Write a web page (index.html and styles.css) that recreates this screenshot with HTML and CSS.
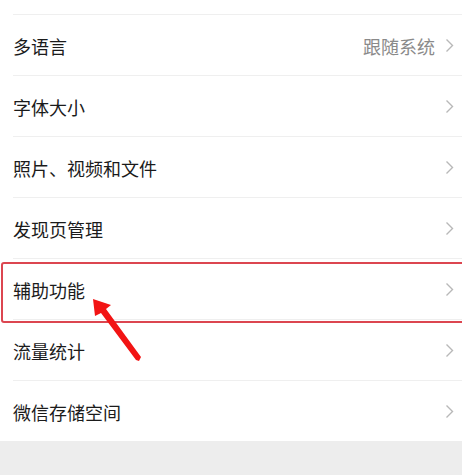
FILE: index.html
```html
<!DOCTYPE html>
<html lang="zh">
<head>
<meta charset="utf-8">
<link rel="stylesheet" href="styles.css">
</head>
<body>
<div class="page">
  <div class="top-spacer"></div>
  <ul class="list">
    <li class="row"><span class="label">多语言</span><span class="right"><span class="value">跟随系统</span><svg class="chev" viewBox="0 0 9 15"><polyline points="1.5,1.5 7.5,7.5 1.5,13.5"/></svg></span></li>
    <li class="row"><span class="label">字体大小</span><span class="right"><svg class="chev" viewBox="0 0 9 15"><polyline points="1.5,1.5 7.5,7.5 1.5,13.5"/></svg></span></li>
    <li class="row"><span class="label">照片、视频和文件</span><span class="right"><svg class="chev" viewBox="0 0 9 15"><polyline points="1.5,1.5 7.5,7.5 1.5,13.5"/></svg></span></li>
    <li class="row"><span class="label">发现页管理</span><span class="right"><svg class="chev" viewBox="0 0 9 15"><polyline points="1.5,1.5 7.5,7.5 1.5,13.5"/></svg></span></li>
    <li class="row"><span class="label">辅助功能</span><span class="right"><svg class="chev" viewBox="0 0 9 15"><polyline points="1.5,1.5 7.5,7.5 1.5,13.5"/></svg></span></li>
    <li class="row"><span class="label">流量统计</span><span class="right"><svg class="chev" viewBox="0 0 9 15"><polyline points="1.5,1.5 7.5,7.5 1.5,13.5"/></svg></span></li>
    <li class="row"><span class="label">微信存储空间</span><span class="right"><svg class="chev" viewBox="0 0 9 15"><polyline points="1.5,1.5 7.5,7.5 1.5,13.5"/></svg></span></li>
  </ul>
  <div class="footer"></div>
  <div class="highlight"></div>
  <svg class="arrow" viewBox="0 0 462 475"><polygon points="93,299 111,305 106,309 141,357 139,361 136,360 101,313 95,316"/></svg>
</div>
</body>
</html>
```

FILE: styles.css
```css
html, body {
  margin: 0;
  padding: 0;
  background: #ffffff;
}
.page {
  position: relative;
  width: 462px;
  height: 475px;
  overflow: hidden;
  font-family: "Noto Sans CJK SC", "Noto Sans", sans-serif;
}
.top-spacer {
  height: 14px;
}
.list {
  list-style: none;
  margin: 0;
  padding: 0;
}
.row {
  position: relative;
  display: flex;
  align-items: center;
  justify-content: space-between;
  height: 61px;
  padding: 2px 8px 0 13px;
  box-sizing: border-box;
}
.row::before {
  content: "";
  position: absolute;
  left: 13px;
  right: 0;
  top: 0;
  height: 1px;
  background: #efefef;
}
.label {
  font-size: 18px;
  color: #1b1b1b;
  line-height: 1;
}
.right {
  display: flex;
  align-items: center;
  gap: 10px;
}
.value {
  font-size: 18px;
  color: #8a8a8a;
  line-height: 1;
}
.chev {
  width: 9px;
  height: 15px;
  fill: none;
  stroke: #b8b8b8;
  stroke-width: 1.4;
}
.footer {
  height: 34px;
  background: #ededed;
}
.highlight {
  position: absolute;
  left: 1px;
  top: 262px;
  width: 470px;
  height: 61px;
  box-sizing: border-box;
  border: 2px solid #dc4650;
  border-radius: 3px;
}
.arrow {
  position: absolute;
  left: 0;
  top: 0;
  width: 462px;
  height: 475px;
  fill: #f21414;
}
```
